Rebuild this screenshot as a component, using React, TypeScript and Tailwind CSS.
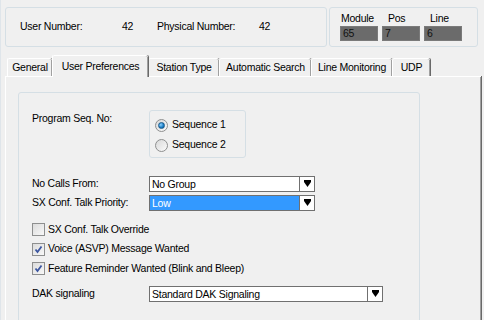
import React from 'react'

const font = { fontFamily: '"Liberation Sans", Arial, sans-serif' }

const Arrow = () => (
  <svg width="7" height="8" viewBox="0 0 7 8">
    <polygon points="0,0 7,0 7,2 3.5,7 0,2" fill="#000" />
  </svg>
)

const Combo = ({ value, width, selected }: { value: string; width: string; selected?: boolean }) => (
  <div className={`flex h-[16px] ${width} border border-[#707070] bg-white`}>
    <div
      className={`flex flex-1 items-center pl-[2px] leading-none ${
        selected ? 'bg-[#3399ff] text-white' : 'text-black'
      }`}
    >
      {value}
    </div>
    <div className="flex w-[15px] items-center justify-center border-l border-[#707070] bg-white">
      <Arrow />
    </div>
  </div>
)

const Radio = ({ label, checked }: { label: string; checked?: boolean }) => (
  <div className="flex h-[20px] items-center">
    <div className="flex h-[13px] w-[13px] items-center justify-center rounded-full border border-[#8e8f8f] bg-gradient-to-br from-[#d8d8d8] to-[#fbfbfb]">
      {checked && (
        <div className="h-[7px] w-[7px] rounded-full border border-[#1b5b8c] bg-[radial-gradient(circle_at_35%_35%,#8fd3ff,#1a7cc4_60%,#0b4e80)]" />
      )}
    </div>
    <span className="ml-[4px]">{label}</span>
  </div>
)

const Check = ({ label, checked }: { label: string; checked?: boolean }) => (
  <div className="flex h-[13px] items-center">
    <div className="flex h-[13px] w-[13px] items-center justify-center border border-[#8e8f8f] bg-gradient-to-br from-[#dcdcdc] to-[#f8f8f8]">
      {checked && (
        <svg width="9" height="9" viewBox="0 0 9 9">
          <path d="M1.5 4.5 L3.5 7 L7.5 1.5" stroke="#3c56a0" strokeWidth="1.8" fill="none" />
        </svg>
      )}
    </div>
    <span className="ml-[3px]">{label}</span>
  </div>
)

const tabs = [
  { label: 'General', w: 'w-[45px]' },
  { label: 'User Preferences', w: 'w-[96px]', active: true },
  { label: 'Station Type', w: 'w-[71px]' },
  { label: 'Automatic Search', w: 'w-[92px]' },
  { label: 'Line Monitoring', w: 'w-[81px]' },
  { label: 'UDP', w: 'w-[38px]' },
]

export default function App() {
  return (
    <div
      style={font}
      className="relative h-[320px] w-[484px] overflow-hidden border-l border-[#dfe5ea] bg-[#f0f0f0] pl-[4px] pt-[7px] text-[10.5px] tracking-[-0.25px] text-black"
    >
      {/* header */}
      <div className="flex h-[40px]">
        <div className="flex w-[322px] items-center rounded-[3px] border border-[#d5dfe5] pl-[14px]">
          <span className="w-[102px]">User Number:</span>
          <span className="w-[35px]">42</span>
          <span className="w-[102px]">Physical Number:</span>
          <span>42</span>
        </div>
        <div className="ml-[2px] w-[149px] rounded-[3px] border border-[#d5dfe5] pl-[10px] pt-[3px]">
          <div className="flex h-[15px] items-center">
            <span className="w-[42px] pl-[1px]">Module</span>
            <span className="w-[42px] pl-[6px]">Pos</span>
            <span className="pl-[6px]">Line</span>
          </div>
          <div className="flex gap-[4px]">
            {['65', '7', '6'].map((v) => (
              <div key={v} className="flex h-[15px] w-[38px] items-center border border-[#7a7a7a] bg-[#6b6b6b] pl-[2px] text-[#111]">
                {v}
              </div>
            ))}
          </div>
        </div>
      </div>

      {/* tabs */}
      <div className="mt-[8px] flex h-[21px] items-end pl-[2px]">
        {tabs.map((t) =>
          t.active ? (
            <div
              key={t.label}
              className={`relative top-[1px] z-10 flex h-[22px] ${t.w} items-start justify-center rounded-t-[2px] border-l border-t border-white bg-[#f0f0f0] pt-[3px] shadow-[inset_-1px_0_#a0a0a0,1px_0_#696969]`}
            >
              {t.label}
            </div>
          ) : (
            <div
              key={t.label}
              className={`flex h-[18px] ${t.w} items-center justify-center rounded-t-[2px] border-l border-t border-white bg-[#f0f0f0] shadow-[inset_-1px_0_#a0a0a0,1px_0_#696969]`}
            >
              {t.label}
            </div>
          )
        )}
      </div>

      {/* panel */}
      <div className="h-[260px] w-[476px] border-l border-t border-white pl-[12px] pt-[15px] shadow-[inset_-1px_0_#a0a0a0,1px_0_#696969]">
        <div className="h-[240px] w-[402px] rounded-[3px] border border-[#d5dfe5] pl-[13px] pt-[17px]">
          <div className="flex">
            <span className="w-[117px] pt-[1px]">Program Seq. No:</span>
            <div className="h-[48px] w-[97px] rounded-[3px] border border-[#d5dfe5] pl-[5px] pt-[4px]">
              <Radio label="Sequence 1" checked />
              <Radio label="Sequence 2" />
            </div>
          </div>

          <div className="mt-[18px] flex items-center">
            <span className="w-[117px]">No Calls From:</span>
            <Combo value="No Group" width="w-[166px]" />
          </div>
          <div className="mt-[3px] flex items-center">
            <span className="w-[117px]">SX Conf. Talk Priority:</span>
            <Combo value="Low" width="w-[166px]" selected />
          </div>

          <div className="mt-[12px] flex flex-col gap-[6.5px]">
            <Check label="SX Conf. Talk Override" />
            <Check label="Voice (ASVP) Message Wanted" checked />
            <Check label="Feature Reminder Wanted (Blink and Bleep)" checked />
          </div>

          <div className="mt-[11px] flex items-center">
            <span className="w-[117px]">DAK signaling</span>
            <Combo value="Standard DAK Signaling" width="w-[234px]" />
          </div>
        </div>
      </div>
    </div>
  )
}
